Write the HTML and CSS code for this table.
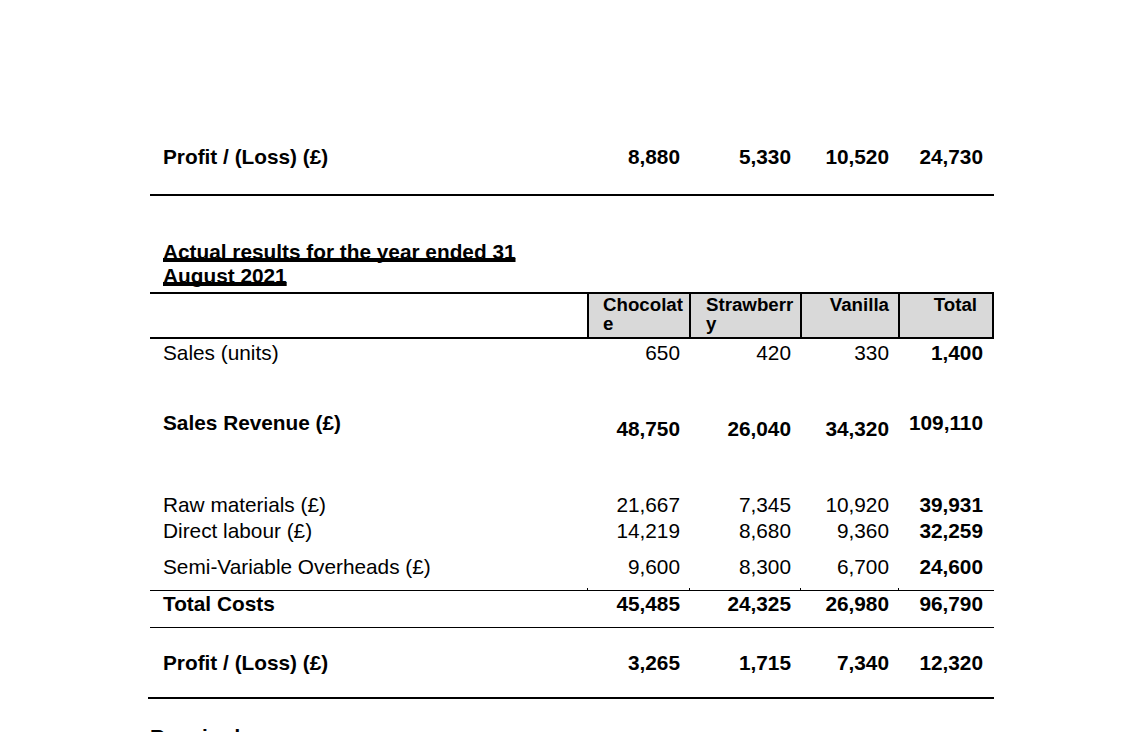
FILE: index.html
```html
<!DOCTYPE html>
<html lang="en">
<head>
<meta charset="utf-8">
<title>Actual results</title>
<link rel="stylesheet" href="styles.css">
</head>
<body>
<div class="page">
  <div class="row r-top b">
    <div class="lbl">Profit / (Loss) (£)</div>
    <div class="num c2">8,880</div>
    <div class="num c3">5,330</div>
    <div class="num c4">10,520</div>
    <div class="num c5">24,730</div>
  </div>

  <h2 class="heading"><span class="ul">Actual results for the year ended 31 August 2021</span></h2>

  <div class="row head">
    <div class="lbl"></div>
    <div class="hc h2c">Chocolate</div>
    <div class="hc h3c">Strawberry</div>
    <div class="hc h4c">Vanilla</div>
    <div class="hc h5c">Total</div>
  </div>

  <div class="row r-units">
    <div class="lbl">Sales (units)</div>
    <div class="num c2">650</div>
    <div class="num c3">420</div>
    <div class="num c4">330</div>
    <div class="num c5 b">1,400</div>
  </div>

  <div class="row r-rev b">
    <div class="lbl">Sales Revenue (£)</div>
    <div class="num c2 low">48,750</div>
    <div class="num c3 low">26,040</div>
    <div class="num c4 low">34,320</div>
    <div class="num c5">109,110</div>
  </div>

  <div class="row r-raw">
    <div class="lbl">Raw materials (£)</div>
    <div class="num c2">21,667</div>
    <div class="num c3">7,345</div>
    <div class="num c4">10,920</div>
    <div class="num c5 b">39,931</div>
  </div>

  <div class="row r-dl">
    <div class="lbl">Direct labour (£)</div>
    <div class="num c2">14,219</div>
    <div class="num c3">8,680</div>
    <div class="num c4">9,360</div>
    <div class="num c5 b">32,259</div>
  </div>

  <div class="row r-semi tk-b">
    <div class="lbl">Semi-Variable Overheads (£)</div>
    <div class="num c2">9,600</div>
    <div class="num c3">8,300</div>
    <div class="num c4">6,700</div>
    <div class="num c5 b">24,600</div>
  </div>

  <div class="row r-tc b">
    <div class="lbl">Total Costs</div>
    <div class="num c2">45,485</div>
    <div class="num c3">24,325</div>
    <div class="num c4">26,980</div>
    <div class="num c5">96,790</div>
  </div>

  <div class="row r-profit tk-t b">
    <div class="lbl">Profit / (Loss) (£)</div>
    <div class="num c2">3,265</div>
    <div class="num c3">1,715</div>
    <div class="num c4">7,340</div>
    <div class="num c5">12,320</div>
  </div>

  <p class="required">Required:</p>
</div>
</body>
</html>
```

FILE: styles.css
```css
html, body {
  margin: 0;
  padding: 0;
  overflow: hidden;
  background: #fff;
}

body {
  font-family: "Liberation Sans", Arial, sans-serif;
  font-size: 20.8px;
  line-height: 24px;
  color: #000;
}

.page {
  padding: 145px 0 0 150px;
}

.row {
  display: grid;
  grid-template-columns: 437px 102px 111px 98px 96px;
  width: 844px;
  box-sizing: border-box;
}

.row > div {
  box-sizing: border-box;
}

.b {
  font-weight: bold;
}

.lbl {
  padding-left: 13px;
  white-space: nowrap;
}

.num {
  text-align: right;
}

.c2, .c3, .c4 {
  padding-right: 9px;
}

.c5 {
  padding-right: 11px;
}

/* first profit row */
.r-top {
  height: 51px;
  border-bottom: 2px solid #000;
}

/* heading */
.heading {
  margin: 44px 0 0;
  padding-left: 13px;
  width: 400px;
  box-sizing: border-box;
  font-size: 20.8px;
  line-height: 24px;
  font-weight: bold;
}

.ul {
  text-decoration: underline;
  text-decoration-thickness: 4px;
  text-underline-offset: -1px;
  text-decoration-skip-ink: none;
}

/* column header */
.head {
  margin-top: 4px;
  height: 47px;
  border-top: 2px solid #000;
  border-bottom: 2px solid #000;
  font-size: 18.7px;
  line-height: 18.5px;
  font-weight: bold;
}

.hc {
  background: #d9d9d9;
  border-left: 2px solid #000;
  padding-top: 2px;
}

.h2c {
  padding-left: 14px;
  padding-right: 1px;
  word-break: break-all;
}

.h3c {
  padding-left: 15px;
  padding-right: 0;
  word-break: break-all;
}

.h4c {
  text-align: right;
  padding-right: 9px;
}

.h5c {
  text-align: right;
  padding-right: 15px;
  border-right: 2px solid #000;
}

/* body rows */
.r-units {
  margin-top: 2px;
  height: 24px;
}

.r-rev {
  margin-top: 46px;
  height: 30px;
}

.low {
  padding-top: 6px;
}

.r-raw {
  margin-top: 52px;
  height: 24px;
}

.r-dl {
  margin-top: 2px;
  height: 24px;
}

.r-semi {
  margin-top: 12px;
  height: 35px;
}

.tk-b > .num {
  background: linear-gradient(#000, #000) 0 100% / 1px 2px no-repeat;
}

.r-tc {
  height: 38px;
  border-top: 1px solid #000;
  border-bottom: 1px solid #000;
  padding-top: 1px;
}

.r-profit {
  margin-left: -2px;
  width: 846px;
  grid-template-columns: 439px 102px 111px 98px 96px;
  height: 71px;
  padding-top: 23px;
  border-bottom: 2px solid #000;
}

.r-profit .lbl {
  padding-left: 15px;
}

.tk-t > .num {
  background: linear-gradient(#000, #000) 0 0 / 1px 2px no-repeat;
}

.r-profit.tk-t > .num {
  background-position: 0 -23px;
}

.required {
  margin: 26px 0 0;
  font-weight: bold;
  line-height: 24px;
}
```
